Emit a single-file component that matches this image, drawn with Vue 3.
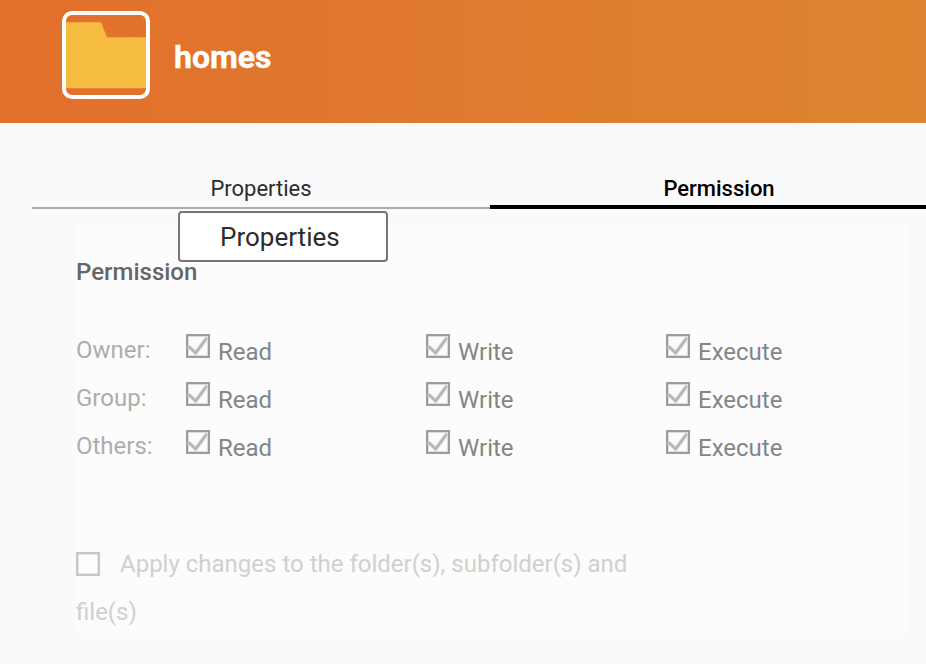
<script setup>
import { ref } from 'vue';

const folderName = ref('homes');
const activeTab = ref('Permission');
const applyToAll = ref(false);

const tabs = ['Properties', 'Permission'];
const actions = ['Read', 'Write', 'Execute'];

const rows = ref([
  { name: 'Owner', Read: true, Write: true, Execute: true },
  { name: 'Group', Read: true, Write: true, Execute: true },
  { name: 'Others', Read: true, Write: true, Execute: true },
]);
</script>

<template>
  <div class="dialog">
    <header class="header">
      <div class="folder">
        <svg width="80" height="80" viewBox="0 0 80 80">
          <path d="M0 7.3H35L41 22.3H80V73.3H0Z" fill="#f6bc42" />
        </svg>
      </div>
      <h1 class="title">{{ folderName }}</h1>
    </header>

    <nav class="tabs">
      <div
        v-for="tab in tabs"
        :key="tab"
        class="tab"
        :class="{ active: tab === activeTab }"
        @click="activeTab = tab"
      >
        <span>{{ tab }}</span>
      </div>
      <div class="tooltip"><span>Properties</span></div>
    </nav>

    <section class="panel">
      <h2 class="heading">Permission</h2>

      <div v-for="row in rows" :key="row.name" class="row">
        <span class="row-name">{{ row.name }}:</span>
        <label v-for="action in actions" :key="action" class="option">
          <svg class="box" width="24" height="24" viewBox="0 0 24 24" @click="row[action] = !row[action]">
            <rect x="1" y="1" width="22" height="22" fill="#fcfcfc" stroke="#9c9c9c" stroke-width="2" />
            <rect x="2.5" y="2.5" width="19" height="19" fill="none" stroke="#dcdcdc" />
            <g v-if="row[action]" fill="none">
              <path d="M2.5 12.5L9.7 18.8L20.8 4" stroke="#e2e2e2" stroke-width="4.4" />
              <path d="M2.5 12.5L9.7 18.8L20.8 4" stroke="#b4b4b4" stroke-width="2.4" />
            </g>
          </svg>
          <span>{{ action }}</span>
        </label>
      </div>

      <div class="apply">
        <svg class="apply-box" width="24" height="24" viewBox="0 0 24 24" @click="applyToAll = !applyToAll">
          <rect x="1" y="1" width="22" height="22" fill="#fdfdfd" stroke="#c6c6c6" stroke-width="2" />
          <rect x="2.5" y="2.5" width="19" height="19" fill="none" stroke="#e8e8e8" />
          <path v-if="applyToAll" d="M2.5 12.5L9.7 18.8L20.8 4" fill="none" stroke="#c6c6c6" stroke-width="2.4" />
        </svg>
        <span>Apply changes to the folder(s), subfolder(s) and file(s)</span>
      </div>
    </section>
  </div>
</template>

<style>
body {
  background: #fafafa;
}
</style>

<style scoped>
.dialog {
  width: 100%;
  height: 664px;
  overflow: hidden;
  background: #fafafa;
  font-family: Roboto, "Liberation Sans", sans-serif;
}

.header {
  display: flex;
  box-sizing: border-box;
  height: 123px;
  padding: 11px 0 0 62px;
  background: linear-gradient(90deg, #e26f2c, #dd8530);
}

.folder {
  box-sizing: border-box;
  width: 88px;
  height: 88px;
  border: 4px solid #fff;
  border-radius: 10px;
  overflow: hidden;
}

.folder svg {
  display: block;
}

.title {
  margin: 0 0 0 24px;
  color: #fff;
  font-size: 32px;
  font-weight: 700;
  line-height: 92px;
  -webkit-text-stroke: 0.4px #fff;
}

.tabs {
  position: relative;
  display: flex;
  width: 916px;
  margin: 45px 0 0 32px;
}

.tab {
  box-sizing: border-box;
  width: 458px;
  height: 41px;
  border-bottom: 2px solid #adadad;
  color: #2c2c2c;
  font-size: 22px;
  line-height: 41px;
  text-align: center;
  cursor: pointer;
}

.tab.active {
  border-bottom: 4px solid #000;
  color: #000;
  font-weight: 500;
}

.tooltip {
  position: absolute;
  left: 146px;
  top: 43px;
  z-index: 1;
  box-sizing: border-box;
  width: 210px;
  height: 51px;
  padding-left: 40px;
  border: 2px solid #767676;
  border-radius: 4px;
  background: #fff;
  color: #2c2c2c;
  font-size: 26px;
  line-height: 48px;
}

.panel {
  box-sizing: border-box;
  width: 832px;
  height: 408px;
  margin: 16px 0 0 76px;
  padding-top: 31px;
  background: #fcfcfc;
  font-size: 24px;
}

.heading {
  margin: 0 0 46px;
  color: #666;
  font-size: 24px;
  font-weight: 500;
  line-height: 32px;
}

.row {
  display: flex;
  height: 48px;
}

.row-name {
  width: 110px;
  color: #adadad;
  line-height: 32px;
}

.option {
  display: flex;
  width: 240px;
  color: #858585;
  line-height: 36px;
}

.box {
  margin-right: 8px;
}

.apply {
  width: 560px;
  margin-top: 62px;
  color: #d0d0d0;
  line-height: 48px;
}

.apply-box {
  margin-right: 20px;
  vertical-align: -4px;
}
</style>
